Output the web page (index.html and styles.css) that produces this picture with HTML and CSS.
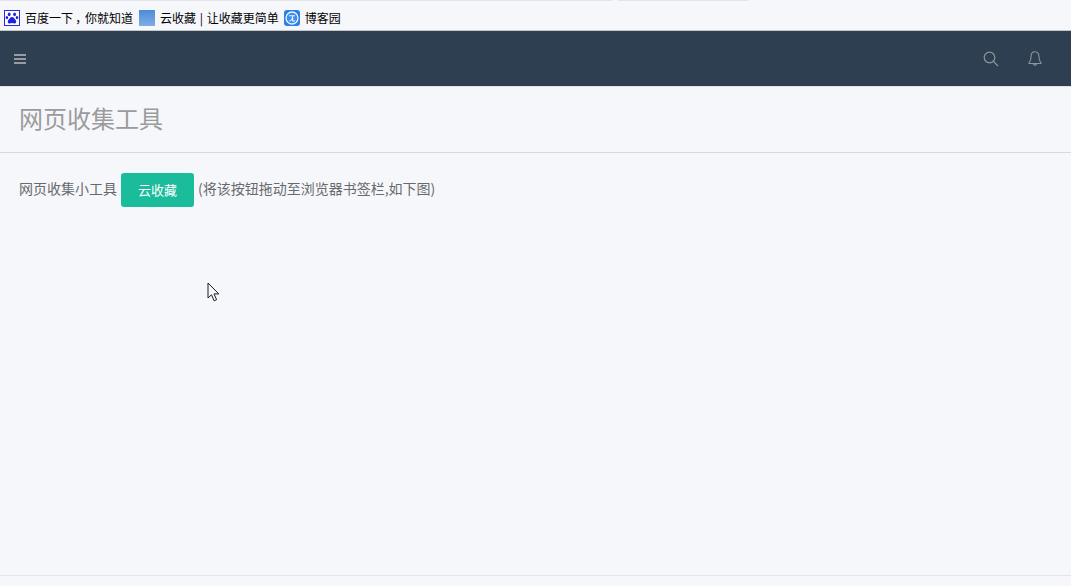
FILE: index.html
```html
<!DOCTYPE html>
<html lang="zh-CN">
<head>
<meta charset="utf-8">
<title>网页收集工具</title>
<link rel="stylesheet" href="styles.css">
</head>
<body>
<div class="page">
  <div class="strip"><span class="strip-a"></span><span class="strip-b"></span></div>
  <div class="bookmarks">
    <span class="mark mark-first">
      <svg class="fav" viewBox="0 0 16 16"><rect x="0.5" y="0.5" width="15" height="15" fill="#fff" stroke="#2a2ae0"/><g fill="#2222dd"><ellipse cx="5.200" cy="4.300" rx="1.400" ry="1.900"/><ellipse cx="10.600" cy="4.300" rx="1.400" ry="1.900"/><ellipse cx="2.900" cy="7.600" rx="1.300" ry="1.700"/><ellipse cx="13" cy="7.600" rx="1.300" ry="1.700"/><path d="M8 7c-2 0-2.200 1.700-3.400 2.700C3.400 10.800 3.500 13.500 5.500 13.500c1 0 1.500-.4 2.500-.4s1.500.4 2.500.4c2 0 2.100-2.700.9-3.800C10.200 8.700 10 7 8 7z"/></g></svg>
      <span class="mark-text">百度一下<span class="comma">，</span>你就知道</span>
    </span>
    <span class="mark">
      <span class="fav fav-cloud"></span>
      <span class="mark-text mark-text-wide">云收藏 | 让收藏更简单</span>
    </span>
    <span class="mark">
      <svg class="fav" viewBox="0 0 16 16"><rect width="16" height="16" rx="3" fill="#2b7fe8"/><circle cx="8" cy="8" r="6" fill="#3f8fee" stroke="#e8f3ff" stroke-width="1.300"/><path d="M5 5.800h6M8.700 5.800c0 3-1 4.700-3.200 5.200M8.700 8v2.500c0 1 1.600 1 2 0" fill="none" stroke="#e8f3ff" stroke-width="1.100"/></svg>
      <span class="mark-text">博客园</span>
    </span>
  </div>
  <header class="navbar">
    <span class="burger"><i></i><i></i><i></i></span>
    <div class="nav-icons">
      <svg class="nav-icon" viewBox="0 0 16 16"><circle cx="6.500" cy="6.500" r="5.300" fill="none" stroke="#8d949c" stroke-width="1.200"/><path d="M10.400 10.400l4.600 4.600" stroke="#8d949c" stroke-width="1.300" fill="none"/></svg>
      <svg class="nav-icon" viewBox="0 0 16 16"><path d="M8 .8c-2.600 0-3.900 2-3.900 4.500 0 3.300-.8 5-2.100 6.500v.7h12v-.7c-1.300-1.500-2.100-3.200-2.100-6.500C11.900 2.800 10.600.8 8 .8z" fill="none" stroke="#8d949c" stroke-width="1.100"/><path d="M6.200 12.800a1.900 1.900 0 0 0 3.600 0" fill="none" stroke="#8d949c" stroke-width="1.100"/></svg>
    </div>
  </header>
  <div class="heading"><h1>网页收集工具</h1></div>
  <main class="content">
    <span class="line-text">网页收集小工具</span>
    <a class="btn">云收藏</a>
    <span class="line-text">(将该按钮拖动至浏览器书签栏,如下图)</span>
  </main>
  <svg class="cursor" viewBox="0 0 14 21"><path d="M1 1v15l3.500-3.200 2.600 6 2.500-1.100-2.600-5.800h4.800z" fill="#f6f7fb" stroke="#1a1a2a" stroke-width="1"/></svg>
  <footer class="footer"></footer>
</div>
</body>
</html>
```
FILE: styles.css
```css
* { box-sizing: border-box; }
html, body { margin: 0; height: 100%; }
body {
  background: #f6f7fb;
  font-family: "Noto Sans CJK SC", "Liberation Sans", sans-serif;
  overflow: hidden;
}
.page { position: relative; height: 586px; display: flex; flex-direction: column; }
.strip { display: flex; gap: 6px; height: 1px; flex: none; }
.strip-a { width: 612px; background: #e3e4ea; }
.strip-b { width: 130px; background: #e3e4ea; }
.bookmarks {
  height: 30px; flex: none; display: flex; align-items: center;
  padding: 4px 0 0 4px; gap: 5px;
  border-bottom: 1px solid #c4c6c8;
}
.mark { display: flex; align-items: center; gap: 5px; }
.mark-first { margin-right: 1px; }
.fav { width: 16px; height: 16px; flex: none; display: block; }
.fav-cloud { background: linear-gradient(#4e8adb, #7eaee3); }
.mark-text { font-size: 12px; line-height: 16px; color: #000; white-space: nowrap; }
.mark-text-wide { word-spacing: 1px; }
.comma { display: inline-block; width: 12px; text-align: center; font-feature-settings: "palt"; }
.navbar {
  height: 56px; flex: none; background: #2d3f51;
  display: flex; align-items: center; justify-content: space-between;
  padding: 0 28px 0 14px;
  border-bottom: 1px solid #dfe2e6;
}
.burger { display: flex; flex-direction: column; gap: 2px; width: 12px; }
.burger i { display: block; height: 2px; background: #999c9e; }
.nav-icons { display: flex; gap: 28px; align-items: center; }
.nav-icon { width: 16px; height: 16px; display: block; }
.heading { height: 66px; flex: none; border-bottom: 1px solid #cfdde3; padding: 0 19px 4px; display: flex; align-items: center; }
.heading h1 { margin: 0; font-size: 24px; font-weight: 400; color: #9b9b9b; line-height: 32px; }
.content {
  display: flex; align-items: center; gap: 4px;
  padding: 20px 19px 0;
  font-size: 14px; color: #676a6c;
}
.line-text { padding-bottom: 4px; }
.btn {
  width: 73px; height: 34px; display: flex; align-items: center; justify-content: center;
  background: #1abc9c; color: #fff; border-radius: 3px; font-size: 13px; padding-bottom: 1px;
}
.cursor { position: absolute; left: 207px; top: 282px; width: 14px; height: 21px; }
.footer { margin-top: auto; height: 11px; flex: none; border-top: 1px solid #e3e5ea; }
```
